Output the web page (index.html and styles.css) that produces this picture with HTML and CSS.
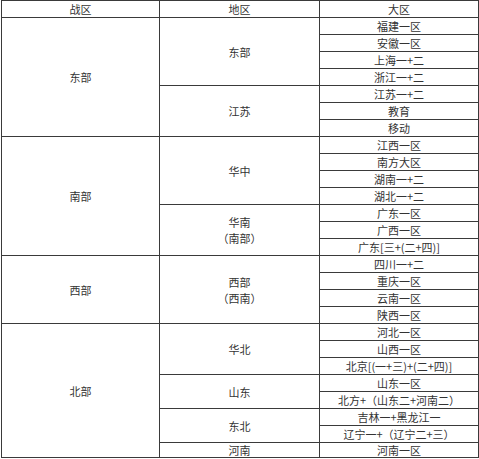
FILE: index.html
```html
<!DOCTYPE html>
<html lang="zh-CN">
<head>
<meta charset="utf-8">
<title>战区</title>
<link rel="stylesheet" href="styles.css">
</head>
<body>
<table class="grid">
  <colgroup>
    <col class="c1">
    <col class="c2">
    <col class="c3">
  </colgroup>
  <thead>
    <tr><th>战区</th><th>地区</th><th>大区</th></tr>
  </thead>
  <tbody>
    <tr><td rowspan="7">东部</td><td rowspan="4">东部</td><td>福建一区</td></tr>
    <tr><td>安徽一区</td></tr>
    <tr><td>上海一+二</td></tr>
    <tr><td>浙江一+二</td></tr>
    <tr><td rowspan="3">江苏</td><td>江苏一+二</td></tr>
    <tr><td>教育</td></tr>
    <tr><td>移动</td></tr>

    <tr><td rowspan="7">南部</td><td rowspan="4">华中</td><td>江西一区</td></tr>
    <tr><td>南方大区</td></tr>
    <tr><td>湖南一+二</td></tr>
    <tr><td>湖北一+二</td></tr>
    <tr><td rowspan="3">华南<br>（南部）</td><td>广东一区</td></tr>
    <tr><td>广西一区</td></tr>
    <tr><td>广东[三+(二+四)]</td></tr>

    <tr><td rowspan="4">西部</td><td rowspan="4">西部<br>（西南）</td><td>四川一+二</td></tr>
    <tr><td>重庆一区</td></tr>
    <tr><td>云南一区</td></tr>
    <tr><td>陕西一区</td></tr>

    <tr><td rowspan="8">北部</td><td rowspan="3">华北</td><td>河北一区</td></tr>
    <tr><td>山西一区</td></tr>
    <tr><td>北京[(一+三)+(二+四)]</td></tr>
    <tr><td rowspan="2">山东</td><td>山东一区</td></tr>
    <tr><td>北方+（山东二+河南二）</td></tr>
    <tr><td rowspan="2">东北</td><td>吉林一+黑龙江一</td></tr>
    <tr><td>辽宁一+（辽宁二+三）</td></tr>
    <tr class="last"><td>河南</td><td>河南一区</td></tr>
  </tbody>
</table>
</body>
</html>
```

FILE: styles.css
```css
html, body {
  margin: 0;
  padding: 0;
  background: #ffffff;
}

body {
  padding: 0 0 0 1px;
  font-family: "Noto Sans CJK SC", "Noto Sans", sans-serif;
  font-size: 11px;
  color: #333333;
}

.grid {
  border-collapse: collapse;
  table-layout: fixed;
  width: 477px;
}

.c1 { width: 158px; }
.c2 { width: 160px; }
.c3 { width: 159px; }

.grid th,
.grid td {
  border: 1px solid #3a3a3a;
  padding: 0;
  height: 16px;
  line-height: 16px;
  text-align: center;
  vertical-align: middle;
  font-weight: normal;
  white-space: nowrap;
}

.grid .last td {
  height: 14px;
  line-height: 14px;
}
```
